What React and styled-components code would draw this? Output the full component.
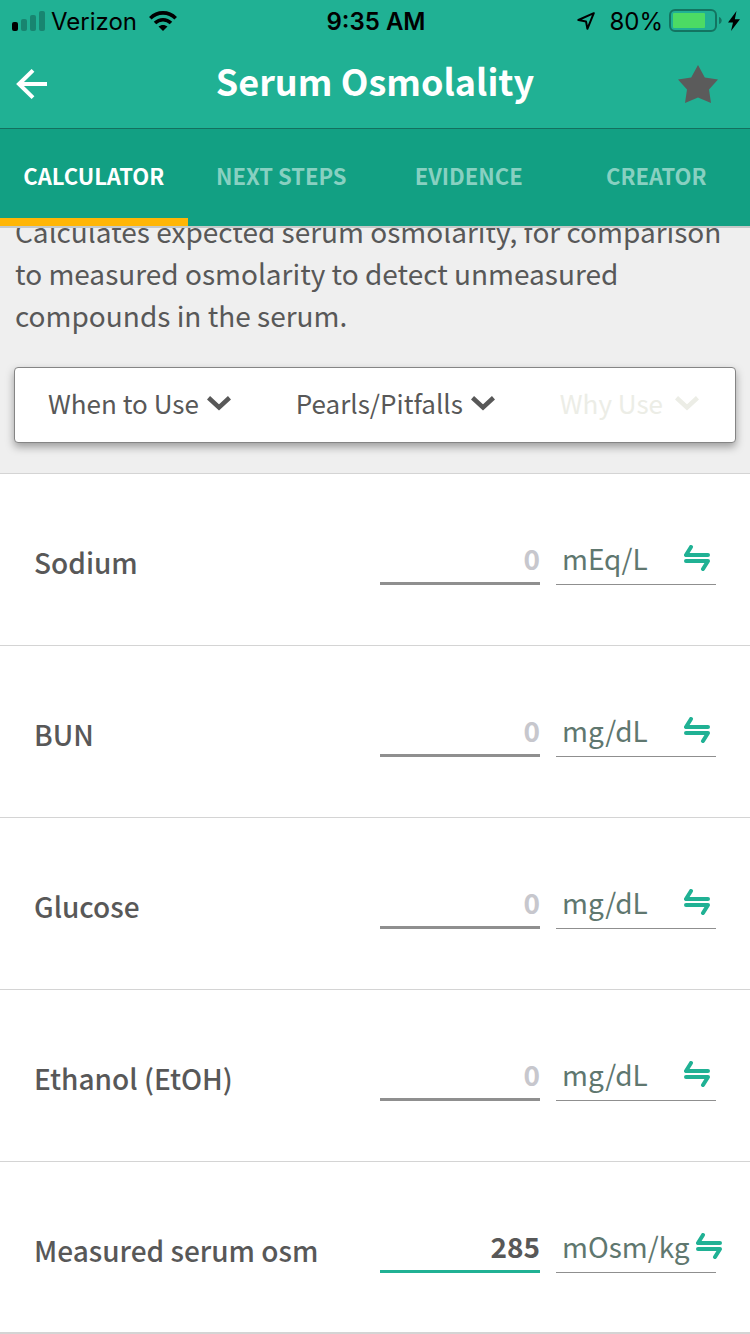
import React, {useState} from 'react';
import styled, {createGlobalStyle} from 'styled-components';

const Colors = {
  primary: '#20b194',
  primaryDark: '#12a083',
  headerLine: '#14705f',
  accent: '#ffb606',
  text: '#585858',
  star: '#5b5b5b',
  unit: '#5f776f',
  line: '#8f8f8f',
  divider: '#d4d4d4',
  disabled: '#ecede6',
  placeholder: '#c7c7cd',
  background: '#efefef',
}

const GlobalStyle = createGlobalStyle`
  * { box-sizing: border-box; }

  body {
    margin: 0;
    background: white;
    color: ${Colors.text};
    font-family: "Noto Sans CJK SC", "Open Sans", sans-serif;
  }

  button, input {
    margin: 0;
    padding: 0;
    border: none;
    border-radius: 0;
    background: none;
    color: inherit;
    font: inherit;
  }

  svg { display: block; flex-shrink: 0; }
`;

const StatusBar = styled.div`
  display: grid;
  grid-template-columns: 1fr auto 1fr;
  align-items: center;
  height: 40px;
  padding: 0 10px 0 12px;
  background: ${Colors.primary};
  color: black;
  font-family: Inter, sans-serif;
  font-size: 24px;
  line-height: 40px;
`

const StatusGroup = styled.div`
  display: flex;
  align-items: center;
  justify-content: ${p => p.$end ? 'flex-end' : 'flex-start'};
  gap: 6px;
`

const Carrier = styled.span`
  padding: 2px 6px 0 0;
`

const Charge = styled.span`
  padding: 2px 0 0 8px;
`

const Clock = styled.div`
  padding-top: 2px;
  font-weight: 600;
`

const Header = styled.header`
  display: grid;
  grid-template-columns: 60px 1fr 60px;
  align-items: center;
  height: 89px;
  padding: 0 8px;
  background: ${Colors.primary};
  border-bottom: 1px solid ${Colors.headerLine};
  color: white;
`

const Title = styled.h1`
  margin: 0;
  padding-bottom: 8px;
  text-align: center;
  font-size: 36px;
  font-weight: 700;
  line-height: 72px;
  white-space: nowrap;
`

const IconButton = styled.button`
  display: flex;
  align-items: center;
  justify-content: ${p => p.$end ? 'flex-end' : 'flex-start'};
  height: 80px;
  padding: 0 ${p => p.$end ? '24px' : '8px'};
`

const Tabs = styled.nav`
  display: grid;
  grid-template-columns: repeat(4, 1fr);
  height: 99px;
  background: ${Colors.primaryDark};
  border-bottom: 2px solid #c4c9c8;
`

const Tab = styled.button`
  border-bottom: 8px solid ${p => p.$active ? Colors.accent : 'transparent'};
  padding-top: 2px;
  color: ${p => p.$active ? 'white' : '#88d0c1'};
  font-size: 22px;
  font-weight: 700;
  white-space: nowrap;
`

const Intro = styled.section`
  overflow: hidden;
  padding: 0 14px 30px;
  background: ${Colors.background};
  border-bottom: 1px solid ${Colors.divider};
`

const Description = styled.p`
  margin: -18px 0 31px;
  padding-left: 1px;
  font-size: 28px;
  line-height: 42px;
`

const InfoBar = styled.div`
  display: flex;
  align-items: center;
  justify-content: space-between;
  height: 76px;
  padding: 0 36px 0 33px;
  background: white;
  border: 1px solid #858585;
  border-radius: 4px;
  box-shadow: 0 4px 8px rgba(0, 0, 0, 0.35);
`

const InfoButton = styled.button`
  display: flex;
  align-items: center;
  gap: ${p => p.disabled ? '12px' : '8px'};
  padding-bottom: 4px;
  color: ${p => p.disabled ? Colors.disabled : Colors.text};
  font-size: 26px;
  line-height: 42px;
  white-space: nowrap;
`

const Row = styled.div`
  display: grid;
  grid-template-columns: 1fr 160px 160px;
  gap: 16px;
  align-items: center;
  height: 172px;
  padding: 0 34px;
  border-bottom: 1px solid ${Colors.divider};

  &:last-child { box-shadow: inset 0 -1px ${Colors.divider}; }
`

const Label = styled.label`
  padding-top: 4px;
  font-size: 28px;
  font-weight: 500;
  line-height: 42px;
`

const ValueInput = styled.input`
  width: 100%;
  height: 50px;
  border-bottom: 3px solid ${p => p.$filled ? Colors.primary : Colors.line};
  outline: none;
  text-align: right;
  font-size: 28px;
  font-weight: 700;

  &::placeholder {
    color: ${Colors.placeholder};
    opacity: 1;
  }
`

const UnitButton = styled.button`
  display: flex;
  align-items: center;
  justify-content: space-between;
  gap: 6px;
  height: 50px;
  padding: 0 6px 2px;
  border-bottom: 1px solid ${Colors.line};
  color: ${Colors.unit};
  font-size: 28px;
  white-space: nowrap;
`

const Signal = () => (
  <svg width="33" height="20" viewBox="0 0 33 20">
    <rect x="0" y="11" width="6" height="9" rx="2" fill="black" />
    <rect x="9" y="8" width="6" height="12" rx="2" fill="#188570" />
    <rect x="18" y="4" width="6" height="16" rx="2" fill="#188570" />
    <rect x="27" y="0" width="6" height="20" rx="2" fill="#188570" />
  </svg>
)

const Wifi = () => (
  <svg width="28" height="20" viewBox="0 0 28 20" fill="none" stroke="black" strokeWidth="3.6">
    <path d="M1.3 7.2C8.5 0.1 19.5 0.1 26.7 7.2" />
    <path d="M6 12C10.6 7.6 17.4 7.6 22 12" />
    <path d="M14 20L9.5 15.6C12 13.4 16 13.4 18.5 15.6Z" fill="black" stroke="none" />
  </svg>
)

const Location = () => (
  <svg width="18" height="18" viewBox="0 0 18 18" fill="none" stroke="black" strokeWidth="2" strokeLinejoin="round">
    <path d="M16.8 1.2L1.4 8L9 9.4L10.4 16.8Z" />
  </svg>
)

const Battery = () => (
  <svg width="53" height="24" viewBox="0 0 53 24">
    <rect x="1" y="1" width="46" height="21" rx="5" fill="none" stroke="#137461" strokeWidth="2" />
    <rect x="4" y="4" width="32" height="15" rx="1" fill="#4cdb64" />
    <path d="M50 8C53.6 9 53.6 14 50 15Z" fill="#137461" />
  </svg>
)

const Bolt = () => (
  <svg width="12" height="20" viewBox="0 0 12 20">
    <path d="M8.5 0L0 11.5H5L3 20L12 8.2H6.8Z" fill="black" />
  </svg>
)

const BackArrow = () => (
  <svg width="31" height="30" viewBox="0 0 31 30" fill="none" stroke="white" strokeWidth="4">
    <path d="M31 15H3M17 1.4L3 15L17 28.6" />
  </svg>
)

const Star = () => (
  <svg width="40" height="38" viewBox="0 0 40 38">
    <path d="M20 0L26.8 12.6L40 14.6L31 24.4L33 38L20 32.4L7 38L9 24.4L0 14.6L13.2 12.6Z" fill={Colors.star} />
  </svg>
)

const Chevron = () => (
  <svg width="24" height="15" viewBox="0 0 24 15" fill="none" stroke="currentColor" strokeWidth="4.6">
    <path d="M1.5 1.8L12 11.4L22.5 1.8" />
  </svg>
)

const Swap = () => (
  <svg width="26" height="26" viewBox="0 0 26 26" fill="none" stroke={Colors.primary} strokeWidth="4" strokeLinecap="round" strokeLinejoin="round">
    <path d="M7 2L2 10H24" />
    <path d="M2 16H24L19 24" />
  </svg>
)

const tabs = ['CALCULATOR', 'NEXT STEPS', 'EVIDENCE', 'CREATOR']

const fields = [
  {id: 'sodium', label: 'Sodium', unit: 'mEq/L'},
  {id: 'bun', label: 'BUN', unit: 'mg/dL'},
  {id: 'glucose', label: 'Glucose', unit: 'mg/dL'},
  {id: 'ethanol', label: 'Ethanol (EtOH)', unit: 'mg/dL'},
  {id: 'measured', label: 'Measured serum osm', unit: 'mOsm/kg', initial: '285'},
]

const Field = (p) => {
  const [value, setValue] = useState(p.initial || '');

  return (
    <Row>
      <Label htmlFor={p.id}>{p.label}</Label>
      <ValueInput
        id={p.id}
        inputMode="decimal"
        placeholder="0"
        value={value}
        $filled={value !== ''}
        onChange={e => setValue(e.target.value)}
      />
      <UnitButton type="button">
        {p.unit}
        <Swap />
      </UnitButton>
    </Row>
  )
}

const App = () => {
  const [activeTab, setActiveTab] = useState(tabs[0]);

  return (
    <>
      <GlobalStyle />
      <StatusBar>
        <StatusGroup>
          <Signal />
          <Carrier>Verizon</Carrier>
          <Wifi />
        </StatusGroup>
        <Clock>9:35 AM</Clock>
        <StatusGroup $end>
          <Location />
          <Charge>80%</Charge>
          <Battery />
          <Bolt />
        </StatusGroup>
      </StatusBar>

      <Header>
        <IconButton type="button" aria-label="Back"><BackArrow /></IconButton>
        <Title>Serum Osmolality</Title>
        <IconButton type="button" aria-label="Favorite" $end><Star /></IconButton>
      </Header>

      <Tabs>
        {tabs.map(tab => (
          <Tab key={tab} type="button" $active={tab === activeTab} onClick={() => setActiveTab(tab)}>
            {tab}
          </Tab>
        ))}
      </Tabs>

      <main>
        <Intro>
          <Description>
            Calculates expected serum osmolarity, for comparison to measured osmolarity to detect unmeasured compounds in the serum.
          </Description>
          <InfoBar>
            <InfoButton type="button">When to Use <Chevron /></InfoButton>
            <InfoButton type="button">Pearls/Pitfalls <Chevron /></InfoButton>
            <InfoButton type="button" disabled>Why Use <Chevron /></InfoButton>
          </InfoBar>
        </Intro>
        <form>
          {fields.map(field => <Field key={field.id} {...field} />)}
        </form>
      </main>
    </>
  )
}

export default App;
